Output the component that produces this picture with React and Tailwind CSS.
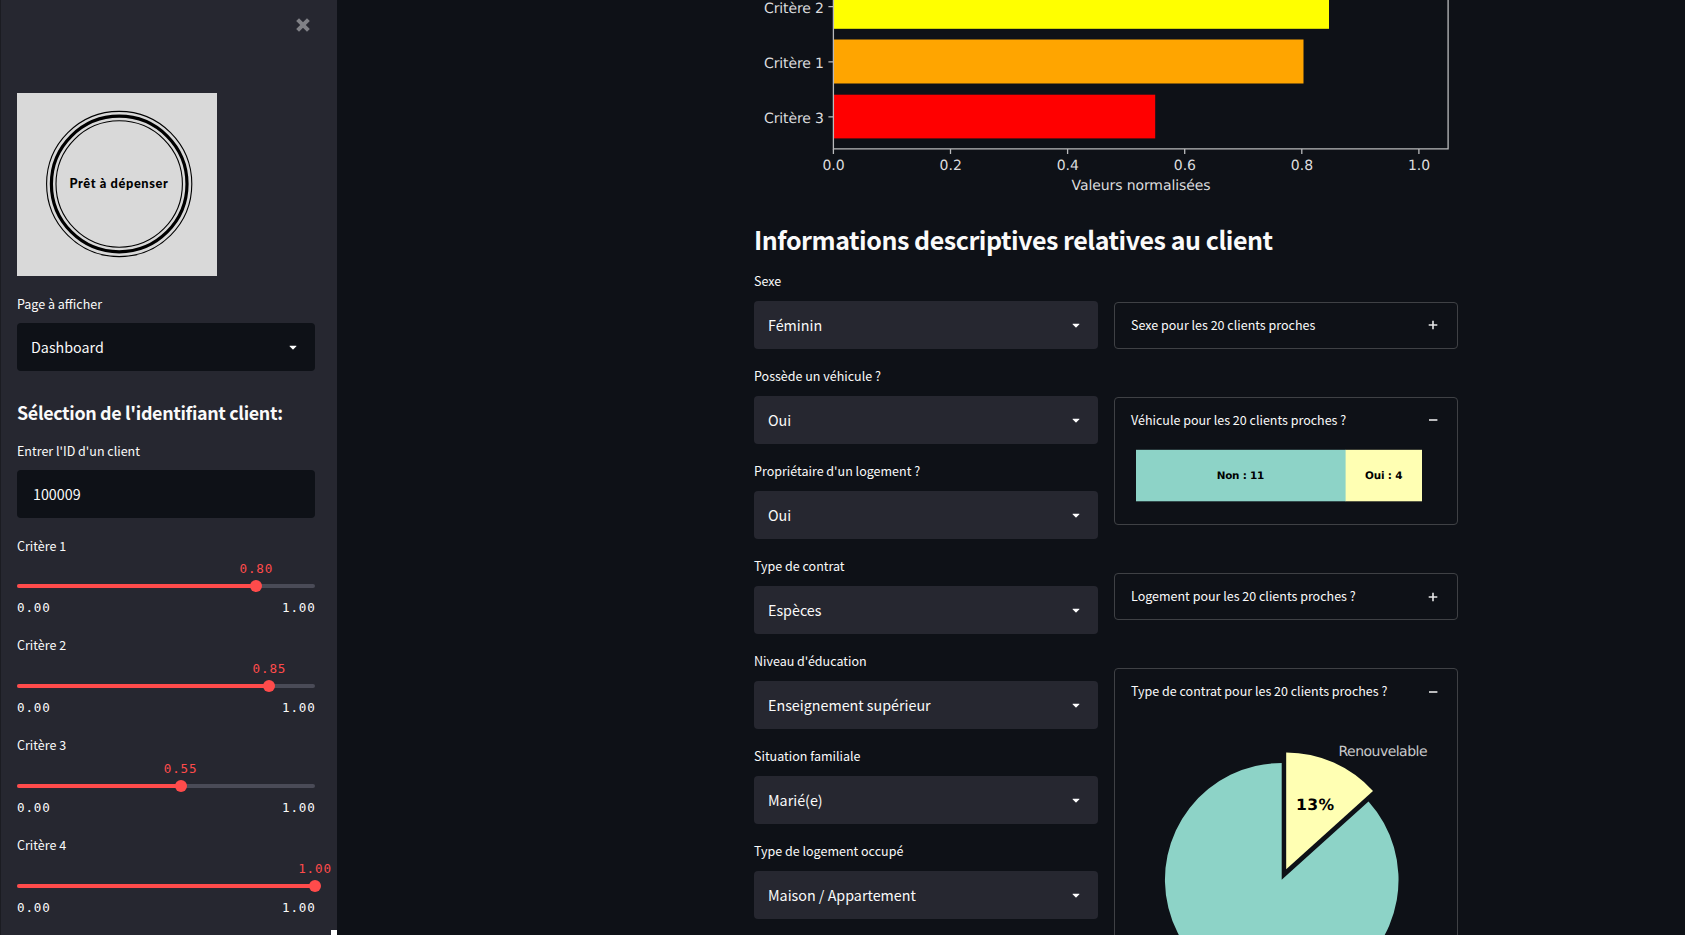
const selects = [
  ['Sexe', 'Féminin'],
  ['Possède un véhicule ?', 'Oui'],
  ["Propriétaire d'un logement ?", 'Oui'],
  ['Type de contrat', 'Espèces'],
  ["Niveau d'éducation", 'Enseignement supérieur'],
  ['Situation familiale', 'Marié(e)'],
  ['Type de logement occupé', 'Maison / Appartement'],
];

const sliders = [
  ['Critère 1', 0.803, '0.80'],
  ['Critère 2', 0.847, '0.85'],
  ['Critère 3', 0.549, '0.55'],
  ['Critère 4', 1, '1.00'],
];

function Caret() {
  return (
    <svg width="16" height="16" viewBox="0 0 24 24" fill="white">
      <path d="M12.7071 15.2929L17.1464 10.8536C17.4614 10.5386 17.2383 10 16.7929 10L7.20711 10C6.76165 10 6.53857 10.5386 6.85355 10.8536L11.2929 15.2929C11.6834 15.6834 12.3166 15.6834 12.7071 15.2929Z" />
    </svg>
  );
}

function Label({ children, tight }) {
  return (
    <div className={`h-5 text-[12.5px] whitespace-nowrap ${tight ? 'leading-[18px]' : 'leading-5'}`}>{children}</div>
  );
}

function Select({ value, className }) {
  return (
    <div className={`flex h-12 items-center justify-between rounded pr-3.5 pl-3.5 text-[14.3px] ${className}`}>
      <span className="leading-6">{value}</span>
      <Caret />
    </div>
  );
}

function Slider({ label, ratio, value, tight }) {
  const pos = { left: `${ratio * 100}%` };
  return (
    <div className="h-[100px] font-['Noto_Sans_CJK_SC',sans-serif]">
      <Label tight={tight}>{label}</Label>
      <div className="relative mt-[28px] h-1 rounded-sm bg-[#4a4b57] font-['DejaVu_Sans_Mono',monospace] text-[12.6px] tracking-[0.81px]">
        <div className="h-1 rounded-sm bg-[#ff4b4b]" style={{ width: `${ratio * 100}%` }} />
        <div className="absolute -top-1 size-3 -translate-x-1/2 rounded-full bg-[#ff4b4b]" style={pos} />
        <div className="absolute -top-[25px] -translate-x-1/2 leading-5 text-[#ff4b4b]" style={pos}>{value}</div>
      </div>
      <div className="-mr-[0.6px] mt-[10px] flex justify-between font-['DejaVu_Sans_Mono',monospace] text-[12.6px] leading-5 tracking-[0.81px]">
        <span>0.00</span>
        <span>1.00</span>
      </div>
    </div>
  );
}

function Logo() {
  return (
    <svg width="200" height="183" viewBox="17 93 200 183" className="block bg-[#d9d9d9]">
      <g fill="none" stroke="#000">
        <circle cx="119.2" cy="184" r="72.6" strokeWidth="1.1" />
        <circle cx="119.2" cy="184" r="67.8" strokeWidth="3.2" />
        <circle cx="119.2" cy="184" r="63.2" strokeWidth="1.1" />
      </g>
      <text x="69.4" y="188" textLength="98.4" fontFamily="Lato, sans-serif" fontWeight="900" fontSize="12.8">Prêt à dépenser</text>
    </svg>
  );
}

function Sidebar() {
  return (
    <aside className="h-full w-[337px] shrink-0 border-l border-[#1b1c22] bg-[#262730] pr-[22px] pl-4">
      <div className="flex h-[93px] justify-end pt-[17px] pr-1">
        <svg width="16" height="16" viewBox="0 0 16 16" stroke="#808186" strokeWidth="4">
          <path d="M2.6 2.6L13.4 13.4M13.4 2.6L2.6 13.4" />
        </svg>
      </div>
      <Logo />
      <div className="mt-[18px]"><Label>Page à afficher</Label></div>
      <Select value="Dashboard" className="mt-[9px] bg-[#0e1117]" />
      <h2 className="mt-[27px] h-7 text-[17.9px] leading-7 font-bold tracking-[-0.34px] whitespace-nowrap">Sélection de l'identifiant client:</h2>
      <div className="mt-[15px]"><Label>Entrer l'ID d'un client</Label></div>
      <div className="mt-[9px] flex h-12 items-center rounded bg-[#0e1117] pl-4 text-[14.3px]">
        <span className="leading-6">100009</span>
      </div>
      <div className="mt-[18px]">
        {sliders.map(([label, ratio, value], i) => (
          <Slider key={label} label={label} ratio={ratio} value={value} tight={i > 0} />
        ))}
      </div>
    </aside>
  );
}

function BarChart() {
  const ticks = ['0.0', '0.2', '0.4', '0.6', '0.8', '1.0'];
  return (
    <svg width="704" height="220" viewBox="754 0 704 220" className="block" textRendering="geometricPrecision" fontFamily="'DejaVu Sans', sans-serif" fontSize="14" fill="#dcdcde">
      <rect x="833.5" y="-15" width="495.5" height="43.8" fill="#ffff00" />
      <rect x="833.5" y="39.5" width="470" height="44" fill="#ffa500" />
      <rect x="833.5" y="94.7" width="321.7" height="43.7" fill="#ff0000" />
      <g stroke="#b9babc" strokeWidth="1.3" fill="none">
        <path d="M833.4 0V148.9H1448.1V0" />
        <path d="M828.4 6.7H833.4M828.4 61.8H833.4M828.4 116.8H833.4" />
        {ticks.map((t, i) => (
          <path key={t} d={`M${833.4 + i * 117.1} 149V154`} />
        ))}
      </g>
      <text x="764" y="12.8" textLength="60">Critère 2</text>
      <text x="764" y="67.5" textLength="60">Critère 1</text>
      <text x="764" y="122.5" textLength="60">Critère 3</text>
      {ticks.map((t, i) => (
        <text key={t} x={833.6 + i * 117.1} y="169.7" textAnchor="middle">{t}</text>
      ))}
      <text x="1071.5" y="189.5" textLength="139">Valeurs normalisées</text>
    </svg>
  );
}

function Expander({ title, open, className, iconClass = '', children }) {
  return (
    <div className={`rounded border border-[#3f4145] ${className}`}>
      <div className="flex h-[44px] items-center justify-between pr-[18px] pl-4">
        <span className="text-[12.5px] leading-5 whitespace-nowrap">{title}</span>
        <svg width="12" height="12" viewBox="0 0 12 12" stroke="#e6e6e8" strokeWidth="1.6" className={iconClass}>
          <path d={open ? 'M2 6H10.4' : 'M1.7 6H10.3M6 1.7V10.3'} />
        </svg>
      </div>
      {children}
    </div>
  );
}

function VehicleChart() {
  return (
    <svg width="342" height="80" viewBox="1115 443 342 80" className="mt-px block" textRendering="geometricPrecision" fontFamily="'DejaVu Sans', sans-serif" fontWeight="bold" fontSize="10.4" fill="#000">
      <rect x="1136" y="449.8" width="210" height="51.5" fill="#8dd3c7" />
      <rect x="1345.6" y="449.8" width="76.4" height="51.5" fill="#ffffb3" />
      <text x="1216.7" y="478.8" textLength="47.5">Non : 11</text>
      <text x="1365" y="478.8" textLength="37.5">Oui : 4</text>
    </svg>
  );
}

function ContractPie() {
  return (
    <svg width="342" height="290" viewBox="1115 714 342 290" className="mt-px block" textRendering="geometricPrecision" fontFamily="'DejaVu Sans', sans-serif">
      <path d="M1281.7 879.8V763A116.8 116.8 0 1 0 1368.5 801.6Z" fill="#8dd3c7" />
      <path d="M1286.2 869.3V752.5A116.8 116.8 0 0 1 1373 791.1Z" fill="#ffffb3" />
      <text x="1338.5" y="756" textLength="89" fontSize="14" fill="#c8c9cb">Renouvelable</text>
      <text x="1296" y="809.6" textLength="38" fontSize="15.6" fontWeight="bold" fill="#000">13%</text>
    </svg>
  );
}

export default function App() {
  return (
    <div className="relative flex h-[935px] w-[1685px] overflow-hidden bg-[#0e1117] font-['Noto_Sans_CJK_SC',sans-serif] text-[#fafafa]">
      <Sidebar />
      <div className="absolute bottom-0 left-[331px] h-[5px] w-1.5 bg-white" />
      <main className="ml-[417px] w-[704px]">
        <BarChart />
        <h1 className="h-[38px] text-[25px] leading-[38px] font-bold tracking-[-0.46px] whitespace-nowrap">Informations descriptives relatives au client</h1>
        <div className="mt-[14px] grid grid-cols-2 gap-4">
          <div>
            {selects.map(([label, value]) => (
              <div key={label} className="h-[95px]">
                <Label tight>{label}</Label>
                <Select value={value} className="mt-[9px] bg-[#262730]" />
              </div>
            ))}
          </div>
          <div className="flex flex-col gap-12 pt-[30px]">
            <Expander title="Sexe pour les 20 clients proches" className="h-[47px]" />
            <Expander title="Véhicule pour les 20 clients proches ?" open className="h-[128px]">
              <VehicleChart />
            </Expander>
            <Expander title="Logement pour les 20 clients proches ?" className="h-[47px]" iconClass="mt-0.5" />
            <Expander title="Type de contrat pour les 20 clients proches ?" open className="h-[340px]" iconClass="mt-0.5">
              <ContractPie />
            </Expander>
          </div>
        </div>
      </main>
    </div>
  );
}
